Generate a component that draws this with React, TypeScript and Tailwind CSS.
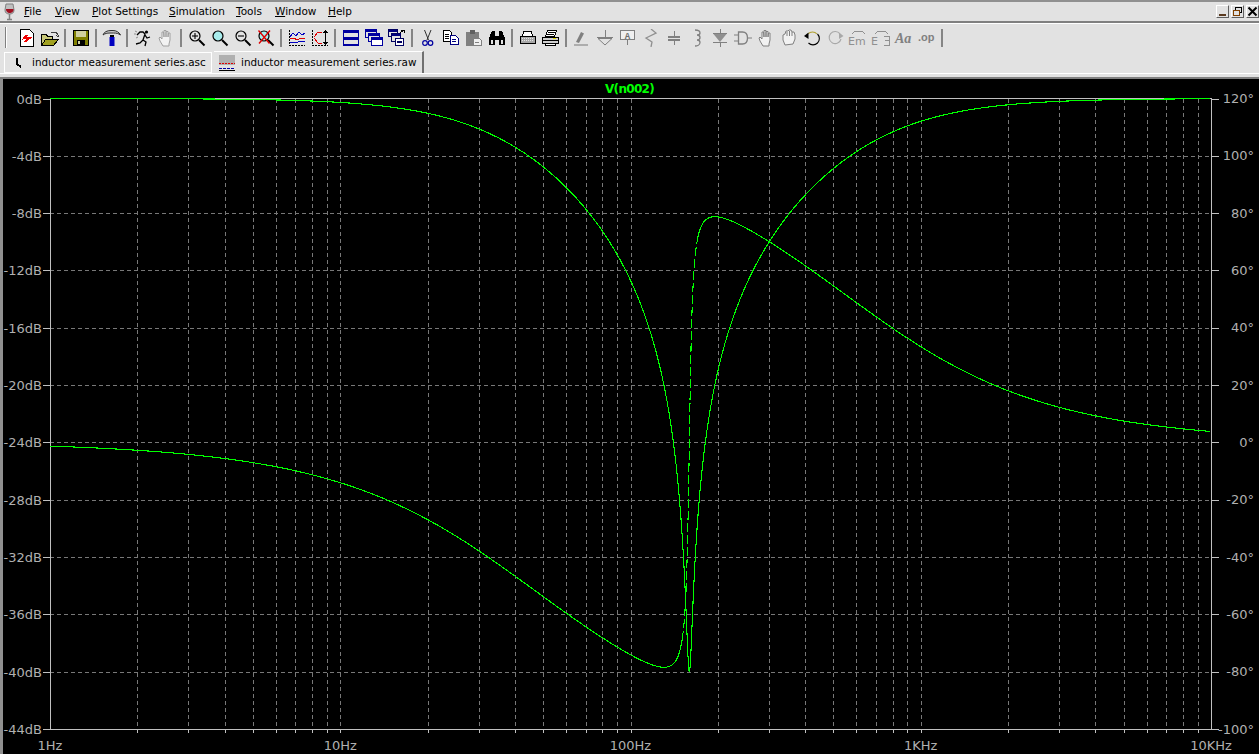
import type { ReactNode } from "react";

const DEC = 290.25;
const F0 = 159.5;
const QP = 0.246;
const QZ = 24.6;

const xOf = (f: number) => 50 + DEC * Math.log10(f);
const yDb = (db: number) => 98.5 - db * 14.33;
const yDeg = (deg: number) => 442 - deg * 2.867;

function response(f: number) {
  const u = f / F0;
  const re = 1 - u * u;
  const numMag = Math.hypot(re, u / QZ);
  const denMag = Math.hypot(re, u / QP);
  const db = 20 * Math.log10(numMag / denMag);
  const deg = ((Math.atan2(u / QZ, re) - Math.atan2(u / QP, re)) * 180) / Math.PI;
  return { db, deg };
}

function samples() {
  const out: number[] = [];
  for (let x = 50; x <= 1211; x += x > 670 && x < 710 ? 0.05 : 1) {
    out.push(Math.pow(10, (x - 50) / DEC));
  }
  return out;
}

const toPath = (pts: [number, number][]) =>
  pts.map((p, i) => `${i ? "L" : "M"}${p[0].toFixed(2)} ${p[1].toFixed(2)}`).join("");

const freqs = samples();
const magPath = toPath(freqs.map((f) => [xOf(f), yDb(response(f).db)]));
const phasePts = freqs.map((f): [number, number] => [xOf(f), yDeg(response(f).deg)]);
const steepFrom = phasePts.findIndex((p) => p[0] > 680 && p[1] < 640);
const steepTo = phasePts.findIndex((p) => p[0] > 680 && p[1] < 240);

const dbLabels = [0, -4, -8, -12, -16, -20, -24, -28, -32, -36, -40, -44];
const degLabels = [120, 100, 80, 60, 40, 20, 0, -20, -40, -60, -80, -100];
const xLabels = ["1Hz", "10Hz", "100Hz", "1KHz", "10KHz"];

const verticals: number[] = [];
for (let d = 0; d < 4; d++) {
  for (let m = 1; m < 10; m++) {
    if (d === 0 && m === 1) continue;
    verticals.push(50 + DEC * (d + Math.log10(m)));
  }
}

function Plot() {
  return (
    <svg width="1256" height="675" viewBox="3 79 1256 675" shapeRendering="crispEdges" className="block">
      {verticals.map((x) => (
        <g key={x}>
          <line x1={Math.round(x) + 0.5} x2={Math.round(x) + 0.5} y1="99" y2="729" stroke="#787878" strokeDasharray="4 3" />
          <line x1={Math.round(x) + 0.5} x2={Math.round(x) + 0.5} y1="729" y2="733" stroke="#c0c0c0" />
        </g>
      ))}
      {dbLabels.slice(1, -1).map((d) => (
        <line key={d} x1="50" x2="1211" y1={Math.round(yDb(d)) + 0.5} y2={Math.round(yDb(d)) + 0.5} stroke="#787878" strokeDasharray="4 3" />
      ))}
      <rect x="50.5" y="98.5" width="1161" height="630.5" fill="none" stroke="#c0c0c0" />
      {dbLabels.map((d) => (
        <g key={d}>
          <line x1="43" x2="50" y1={Math.round(yDb(d)) + 0.5} y2={Math.round(yDb(d)) + 0.5} stroke="#c0c0c0" />
          <line x1="1212" x2="1219" y1={Math.round(yDb(d)) + 0.5} y2={Math.round(yDb(d)) + 0.5} stroke="#c0c0c0" />
          <text x="42" y={yDb(d) + 5} textAnchor="end" className="fill-[#b0b0b0] font-['DejaVu_Sans'] text-[13px]">
            {d}dB
          </text>
        </g>
      ))}
      {degLabels.map((d) => (
        <text key={d} x="1254" y={yDeg(d) + 5} textAnchor="end" className="fill-[#b0b0b0] font-['DejaVu_Sans'] text-[13px]">
          {d}°
        </text>
      ))}
      {xLabels.map((t, i) => (
        <text key={t} x={50 + DEC * i} y="750" textAnchor="middle" className="fill-[#b0b0b0] font-['DejaVu_Sans'] text-[13px]">
          {t}
        </text>
      ))}
      <text x="629.500" y="93" textAnchor="middle" className="fill-[#00ff00] font-['DejaVu_Sans'] text-[12px] font-bold tracking-[-0.7px]">
        V(n002)
      </text>
      <path d={magPath} fill="none" stroke="#00ff00" strokeWidth="1.100" />
      <path d={toPath(phasePts.slice(0, steepFrom + 1))} fill="none" stroke="#00ff00" strokeWidth="1.100" />
      <path d={toPath(phasePts.slice(steepFrom, steepTo + 1))} fill="none" stroke="#00ff00" strokeWidth="1.100" strokeDasharray="9 3" />
      <path d={toPath(phasePts.slice(steepTo))} fill="none" stroke="#00ff00" strokeWidth="1.100" />
    </svg>
  );
}

function Ico({ children, w = 18 }: { children: ReactNode; w?: number }) {
  return (
    <svg width={w} height="18" viewBox={`0 0 ${w} 18`} shapeRendering="crispEdges" fill="none">
      {children}
    </svg>
  );
}

const Zoom = ({ sign, cross }: { sign?: "+" | "-"; cross?: boolean }) => (
  <svg width="18" height="18" viewBox="0 0 18 18" fill="none">
    <circle cx="7" cy="7" r="5" fill={sign ? "#e2e2e2" : "#a8ecec"} stroke="#000" strokeWidth="1.200" />
    {sign && <path d="M4 7h6" stroke="#000" strokeWidth="1.100" />}
    {sign === "+" && <path d="M7 4v6" stroke="#000" strokeWidth="1.100" />}
    <path d="M11 11l5.500 5.500" stroke="#000" strokeWidth="2" />
    {cross && <path d="M1.500 1.500l11 13M13 1.500l-11 13" stroke="#e00000" strokeWidth="1.400" />}
  </svg>
);

const Hand = ({ color = "#909090" }: { color?: string }) => (
  <svg width="18" height="18" viewBox="0 0 18 18" fill="none">
    <path
      d="M6 17l-3-5-1-3 1-1 2 2V3h1.500l.5 5V1.500h2L9 8V2.500h2V8l.5-4H13v7l-1 4v2z"
      fill="#f2f2f2"
      stroke={color}
    />
  </svg>
);

const iconText = "fill-[#808080] font-['Liberation_Sans'] font-bold";

const icons: Record<string, ReactNode> = {
  newSch: (
    <Ico>
      <path d="M2.500.5h9l4 4v13h-13z" fill="#fff" stroke="#000" />
      <path d="M4 11l3-5h3l-1 2h5l-1 2h-2l-2 3H6l2-3H6z" fill="#f00000" />
    </Ico>
  ),
  open: (
    <Ico w={20}>
      <path d="M1.500 5.500h5l1 2h5v9h-11z" fill="#c8c878" stroke="#000" />
      <path d="M1.500 16.500l4-6h13l-5 6z" fill="#a0a020" stroke="#000" />
      <path d="M11 3.500h5l2 2M16.500 6.500l1.500 1.500 1-2" stroke="#404040" />
    </Ico>
  ),
  save: (
    <Ico>
      <rect x="1.500" y="1.500" width="15" height="15" fill="#808000" stroke="#000" />
      <rect x="4" y="2" width="10" height="6" fill="#d0d0a0" />
      <rect x="5" y="11" width="8" height="5" fill="#000" />
      <rect x="6" y="12" width="2" height="3" fill="#d0d0a0" />
    </Ico>
  ),
  hammer: (
    <svg width="20" height="18" viewBox="0 0 20 18" fill="none">
      <path d="M1 6c1-3 4-4.500 8-4.500h2c3 0 6 1.500 7.500 4.500-2-1.500-4-2-7-2H8C5 4 3 4.500 1 6z" fill="#c8c8c8" stroke="#303030" />
      <rect x="8" y="6" width="4" height="2" fill="#000" />
      <rect x="7.500" y="8" width="5" height="9" fill="#0000c0" />
    </svg>
  ),
  run: (
    <svg width="18" height="18" viewBox="0 0 18 18" fill="none">
      <circle cx="12.500" cy="3" r="1.600" fill="#000" />
      <path d="M3 6l3-3h3l2 2-2 6 3 2-1 4M9 11l-3 3-4 1M11 6l2 3 3-1" stroke="#000" strokeWidth="1.300" />
      <path d="M1 2l2 1M0 5l2 0M2 9l2-1" stroke="#909090" />
    </svg>
  ),
  hand: <Hand color="#a0a0a0" />,
  zoomIn: <Zoom sign="+" />,
  zoom: <Zoom />,
  zoomOut: <Zoom sign="-" />,
  zoomX: <Zoom cross />,
  plotAll: (
    <Ico>
      <path d="M1.500 1v15.500H17" stroke="#000" strokeDasharray="2 1" />
      <path d="M2 8l3-4 3 3 3-4 3 3 3-2" stroke="#0000c0" />
      <path d="M2 10l4-1 3 2 4-2 4 1" stroke="#e00000" />
      <path d="M2 13h5l2 1 2-2 6 1" stroke="#0000c0" />
    </Ico>
  ),
  plotFit: (
    <Ico>
      <path d="M1.500 1v15.500H17" stroke="#000" strokeDasharray="2 1" />
      <path d="M3 8l4-5h4M3 9l4 5h4" stroke="#e00000" />
      <path d="M14.500 2v13M12.500 4l2-2 2 2M12.500 13l2 2 2-2" stroke="#000" />
    </Ico>
  ),
  winTile: (
    <Ico>
      <rect x="1" y="1" width="16" height="16" fill="#0000a0" />
      <rect x="2" y="4" width="14" height="4" fill="#e2e2e2" />
      <rect x="2" y="11" width="14" height="4" fill="#e2e2e2" />
    </Ico>
  ),
  winCascade: (
    <Ico>
      <rect x="0.500" y="0.500" width="11" height="8" fill="#e2e2e2" stroke="#0000a0" />
      <rect x="1" y="1" width="10" height="2" fill="#0000a0" />
      <rect x="3.500" y="4.500" width="11" height="8" fill="#e2e2e2" stroke="#0000a0" />
      <rect x="4" y="5" width="10" height="2" fill="#0000a0" />
      <rect x="6.500" y="8.500" width="11" height="8" fill="#fff" stroke="#0000a0" />
      <rect x="7" y="9" width="10" height="2" fill="#0000a0" />
    </Ico>
  ),
  winMin: (
    <Ico>
      <rect x="0.500" y="0.500" width="9" height="7" fill="#e2e2e2" stroke="#000060" />
      <rect x="1" y="1" width="8" height="2" fill="#000080" />
      <rect x="3.500" y="4.500" width="9" height="8" fill="#e2e2e2" stroke="#000060" />
      <rect x="4" y="5" width="8" height="2" fill="#000080" />
      <rect x="7.500" y="9.500" width="8" height="7" fill="#fff" stroke="#000060" />
      <rect x="9" y="12" width="5" height="2" fill="#000060" />
      <path d="M12 4l4-3M13 1h3v3" stroke="#000" />
    </Ico>
  ),
  cut: (
    <svg width="16" height="18" viewBox="0 0 16 18" fill="none">
      <path d="M4.500 1l4 10M11 1L7 11" stroke="#303030" />
      <circle cx="5" cy="14" r="2.300" stroke="#0000a0" strokeWidth="1.200" />
      <circle cx="10.500" cy="14" r="2.300" stroke="#0000a0" strokeWidth="1.200" />
    </svg>
  ),
  copy: (
    <Ico>
      <path d="M1.500 1.500h6l2 2v9h-8z" fill="#fff" stroke="#000" />
      <path d="M3 5h4M3 7h4M3 9h4" stroke="#000" />
      <path d="M8.500 6.500h5l2.500 2.500v6H8.500z" fill="#fff" stroke="#000080" />
      <path d="M10 10h4M10 12h4" stroke="#000080" />
    </Ico>
  ),
  paste: (
    <Ico>
      <rect x="1" y="3" width="13" height="14" fill="#808080" rx="1" />
      <rect x="5" y="1" width="5" height="4" fill="#606060" />
      <path d="M8.500 9.500h6l2 2v5h-8z" fill="#f0f0f0" stroke="#808080" />
      <path d="M10 13h4" stroke="#808080" />
    </Ico>
  ),
  find: (
    <Ico>
      <path d="M1 16V9l3-7h3v14zM17 16V9l-3-7h-3v14z" fill="#000" />
      <rect x="7" y="7" width="4" height="4" fill="#000" />
      <rect x="3" y="11" width="2" height="4" fill="#e2e2e2" />
      <rect x="13" y="11" width="2" height="4" fill="#e2e2e2" />
    </Ico>
  ),
  preview: (
    <Ico w={16}>
      <path d="M3.500 2.500h8l1 5h-10z" fill="#fff" stroke="#000" />
      <path d="M.500 7.500h15v7h-15z" fill="#a8a8a8" stroke="#000" />
      <path d="M2 9h12M2 11h12" stroke="#e2e2e2" strokeDasharray="1 1" />
    </Ico>
  ),
  print: (
    <Ico>
      <path d="M5.500 1.500h9l-2 6h-9z" fill="#fff" stroke="#000" />
      <path d="M6 3h7M5 5h7" stroke="#000" />
      <path d="M.500 8.500h16v6h-16z" fill="#d0d0d0" stroke="#000" />
      <path d="M1 11h15" stroke="#000" />
      <rect x="11" y="9" width="3" height="1" fill="#e0e000" />
      <path d="M3.500 14.500h10v2h-10z" fill="#fff" stroke="#000" />
    </Ico>
  ),
  wire: (
    <svg width="18" height="18" viewBox="0 0 18 18" fill="none">
      <path d="M3 13l5-10 3 1.500L6 14z" fill="#808080" />
      <path d="M1 16h14" stroke="#909090" strokeWidth="1.300" />
    </svg>
  ),
  ground: (
    <svg width="18" height="18" viewBox="0 0 18 18" fill="none" shapeRendering="crispEdges">
      <path d="M9 1v7M1 8h16" stroke="#808080" />
      <path d="M2 9.500h14L9 16z" stroke="#808080" fill="none" shapeRendering="auto" />
    </svg>
  ),
  label: (
    <Ico>
      <rect x="1.500" y="1.500" width="14" height="9" rx="1" stroke="#808080" fill="#f0f0f0" />
      <text x="8.500" y="9.500" textAnchor="middle" className="fill-[#707070] font-['Liberation_Mono'] text-[9px] font-bold">
        A
      </text>
      <path d="M8.500 11v5" stroke="#808080" />
    </Ico>
  ),
  res: (
    <svg width="16" height="18" viewBox="0 0 16 18" fill="none">
      <path d="M8 0l5 4-10 5 6 4-1 5" stroke="#909090" strokeWidth="1.300" />
    </svg>
  ),
  cap: (
    <Ico w={16}>
      <path d="M8 2v5M8 11v5" stroke="#808080" />
      <path d="M2 7.500h12M2 10.500h12" stroke="#808080" strokeWidth="2" />
    </Ico>
  ),
  ind: (
    <svg width="14" height="18" viewBox="0 0 14 18" fill="none">
      <path d="M5 1c3 0 5 1 5 3s-3 2-3 2 3 0 3 2.500S7 11 7 11s3 0 3 2.500S7 17 5 17" stroke="#808080" strokeWidth="1.300" />
    </svg>
  ),
  diode: (
    <Ico>
      <path d="M9 0v4M9 13v5M2 4.500h14M2 13.500h14" stroke="#808080" />
      <path d="M2.500 5h13L9 13z" fill="#909090" shapeRendering="auto" />
    </Ico>
  ),
  gate: (
    <svg width="18" height="18" viewBox="0 0 18 18" fill="none">
      <path d="M4.500 3h4c4 0 5 3.500 5 6s-1 6-5 6h-4z" stroke="#808080" strokeWidth="1.300" />
      <path d="M0 6h4M0 12h4M14 9h4" stroke="#808080" />
    </svg>
  ),
  hand2: <Hand color="#808080" />,
  grab: (
    <svg width="18" height="18" viewBox="0 0 18 18" fill="none">
      <path d="M5 16l-2-5V6l2-1 1-3h2l1-1h2l1 2h2l1 3v4l-2 5z" fill="#f2f2f2" stroke="#808080" />
      <path d="M7 3v4M9.500 2v5M12 3v4" stroke="#808080" />
    </svg>
  ),
  undo: (
    <svg width="18" height="18" viewBox="0 0 18 18" fill="none">
      <path d="M5 5a6 6 0 0 1 9 0" stroke="#b0a030" strokeWidth="1.100" />
      <path d="M14.500 5a6 6 0 0 1-9 9" stroke="#000" strokeWidth="1.100" />
      <path d="M1 7l4.500 3V3.500z" fill="#000" />
    </svg>
  ),
  redo: (
    <svg width="18" height="18" viewBox="0 0 18 18" fill="none">
      <path d="M14 5a6 6 0 1 0 1 5" stroke="#a8a8a8" strokeWidth="1.100" />
      <path d="M17.500 7l-4.500 3V3.500z" fill="#a8a8a8" />
    </svg>
  ),
  textM: (
    <Ico w={20}>
      <path d="M4 5l3-3h7l3 3" stroke="#909090" />
      <text x="0" y="16" className="fill-[#909090] font-['DejaVu_Sans'] text-[11px]">
        Em
      </text>
    </Ico>
  ),
  textE: (
    <Ico w={20}>
      <path d="M4 5l3-3h7l3 3" stroke="#909090" />
      <text x="0" y="16" className="fill-[#909090] font-['DejaVu_Sans'] text-[11px]">
        E
      </text>
      <path d="M13 7.500h5v8.500h-5M14 11.500h4" stroke="#909090" />
    </Ico>
  ),
  aa: (
    <svg width="20" height="18" viewBox="0 0 20 18" fill="none">
      <text x="1" y="14" className="fill-[#808080] font-['Liberation_Serif'] text-[14px] font-bold italic">
        Aa
      </text>
    </svg>
  ),
  op: (
    <svg width="20" height="18" viewBox="0 0 20 18" fill="none">
      <text x="1" y="12" className={`${iconText} text-[11px]`}>
        .op
      </text>
    </svg>
  ),
};

const toolbar: (string | null)[] = [
  "newSch", "open", null,
  "save", null,
  "hammer", null,
  "run", "hand", null,
  "zoomIn", "zoom", "zoomOut", "zoomX", null,
  "plotAll", "plotFit", null,
  "winTile", "winCascade", "winMin", null,
  "cut", "copy", "paste", "find", null,
  "preview", "print", null,
  "wire", "ground", "label", "res", "cap", "ind", "diode", "gate", "hand2", "grab", "undo", "redo", "textM", "textE", "aa", "op", null,
];

const menu: [string, string, string][] = [
  ["F", "ile", "w-[31px]"],
  ["V", "iew", "w-[37px]"],
  ["P", "lot Settings", "w-[77px]"],
  ["S", "imulation", "w-[67px]"],
  ["T", "ools", "w-[39px]"],
  ["W", "indow", "w-[53px]"],
  ["H", "elp", "w-[30px]"],
];

function WinButton({ children }: { children: ReactNode }) {
  return (
    <div className="flex h-[13px] w-[13px] items-center justify-center border border-t-white border-l-white border-r-[#606060] border-b-[#606060] bg-[#e2e2e2]">
      {children}
    </div>
  );
}

export default function App() {
  return (
    <div className="flex h-[754px] w-[1259px] flex-col overflow-hidden bg-[#e2e2e2] font-['DejaVu_Sans',sans-serif] text-black">
      {/* Menu bar */}
      <div className="flex h-[23px] shrink-0 items-center border-t-2 border-b-2 border-t-[#909090] border-b-[#808080]">
        <svg width="12" height="18" viewBox="0 0 12 18" className="ml-[4px] mr-[8px]" fill="none">
          <path d="M2 1h7l1 6c0 3-2 4-4.500 4S1 10 1 7z" fill="#c0c0c0" stroke="#808080" />
          <path d="M2 6h7.500c.3 3-2 4-4 4S1.700 8 2 6z" fill="#a01020" />
          <path d="M5.500 11v5M3 16.500h5" stroke="#808080" strokeWidth="1.500" />
        </svg>
        <div className="flex text-[10.5px]">
          {menu.map(([a, b, w]) => (
            <span key={a} className={`whitespace-nowrap ${w}`}>
              <span className="underline">{a}</span>
              {b}
            </span>
          ))}
        </div>
        <div className="ml-auto flex gap-[2px]">
          <WinButton>
            <div className="mt-[7px] h-[2px] w-[7px] bg-[#5a3a20]" />
          </WinButton>
          <WinButton>
            <svg width="11" height="11" viewBox="0 0 11 11" fill="none" shapeRendering="crispEdges">
              <rect x="3.500" y="1.500" width="6" height="5" stroke="#000" />
              <rect x="1.500" y="4.500" width="6" height="5" stroke="#804000" fill="#e2e2e2" />
            </svg>
          </WinButton>
          <WinButton>
            <svg width="11" height="11" viewBox="0 0 11 11" fill="none">
              <path d="M1.500 1.500l8 8M9.500 1.500l-8 8" stroke="#000" strokeWidth="2" />
            </svg>
          </WinButton>
        </div>
      </div>

      {/* Toolbar */}
      <div className="flex h-[28px] shrink-0 items-center border-t border-t-white pl-[5px]">
        <div className="mr-[8px] h-[21px] w-[2px] border-l border-l-[#808080] bg-white" />
        {toolbar.map((name, i) =>
          name ? (
            <div key={i} className="flex h-[22px] w-[23px] items-center justify-center">
              {icons[name]}
            </div>
          ) : (
            <div key={i} className="flex h-[18px] w-[8px] justify-center">
              <div className="h-full w-[2px] bg-[#858585]" />
            </div>
          ),
        )}
      </div>

      {/* Tabs */}
      <div className="flex h-[22px] shrink-0 items-end pl-[4px] text-[10.4px]">
        <div className="flex h-[21px] w-[208px] items-center border border-white pl-[10px] pt-[1px]">
          <svg width="8" height="10" viewBox="0 0 8 10" fill="none" shapeRendering="crispEdges" className="mr-[9px]">
            <path d="M2 0v6l4 3" stroke="#000" strokeWidth="2" />
          </svg>
          <span className="whitespace-nowrap">inductor measurement series.asc</span>
        </div>
        <div className="ml-[2px] flex h-[22px] w-[210px] items-center border-r-2 border-t border-r-[#707070] border-t-white pl-[5px] pt-[1px]">
          <svg width="16" height="16" viewBox="0 0 16 16" shapeRendering="crispEdges" fill="none" className="mr-[6px] -mt-[1px]">
            <rect width="16" height="10" fill="#b0b0b0" />
            <path d="M0 8h16" stroke="#e00000" strokeDasharray="2 1" />
            <path d="M0 13h16" stroke="#0000a0" strokeDasharray="3 1" />
            <path d="M0 15h16" stroke="#000" />
          </svg>
          <span className="whitespace-nowrap">inductor measurement series.raw</span>
        </div>
      </div>

      <div className="h-[4px] shrink-0 border-t border-t-white" />
      <div className="h-[2px] shrink-0 bg-[#808080]" />

      {/* Plot */}
      <div className="flex-1 border-l-[3px] border-l-[#909090] bg-black">
        <Plot />
      </div>
    </div>
  );
}
